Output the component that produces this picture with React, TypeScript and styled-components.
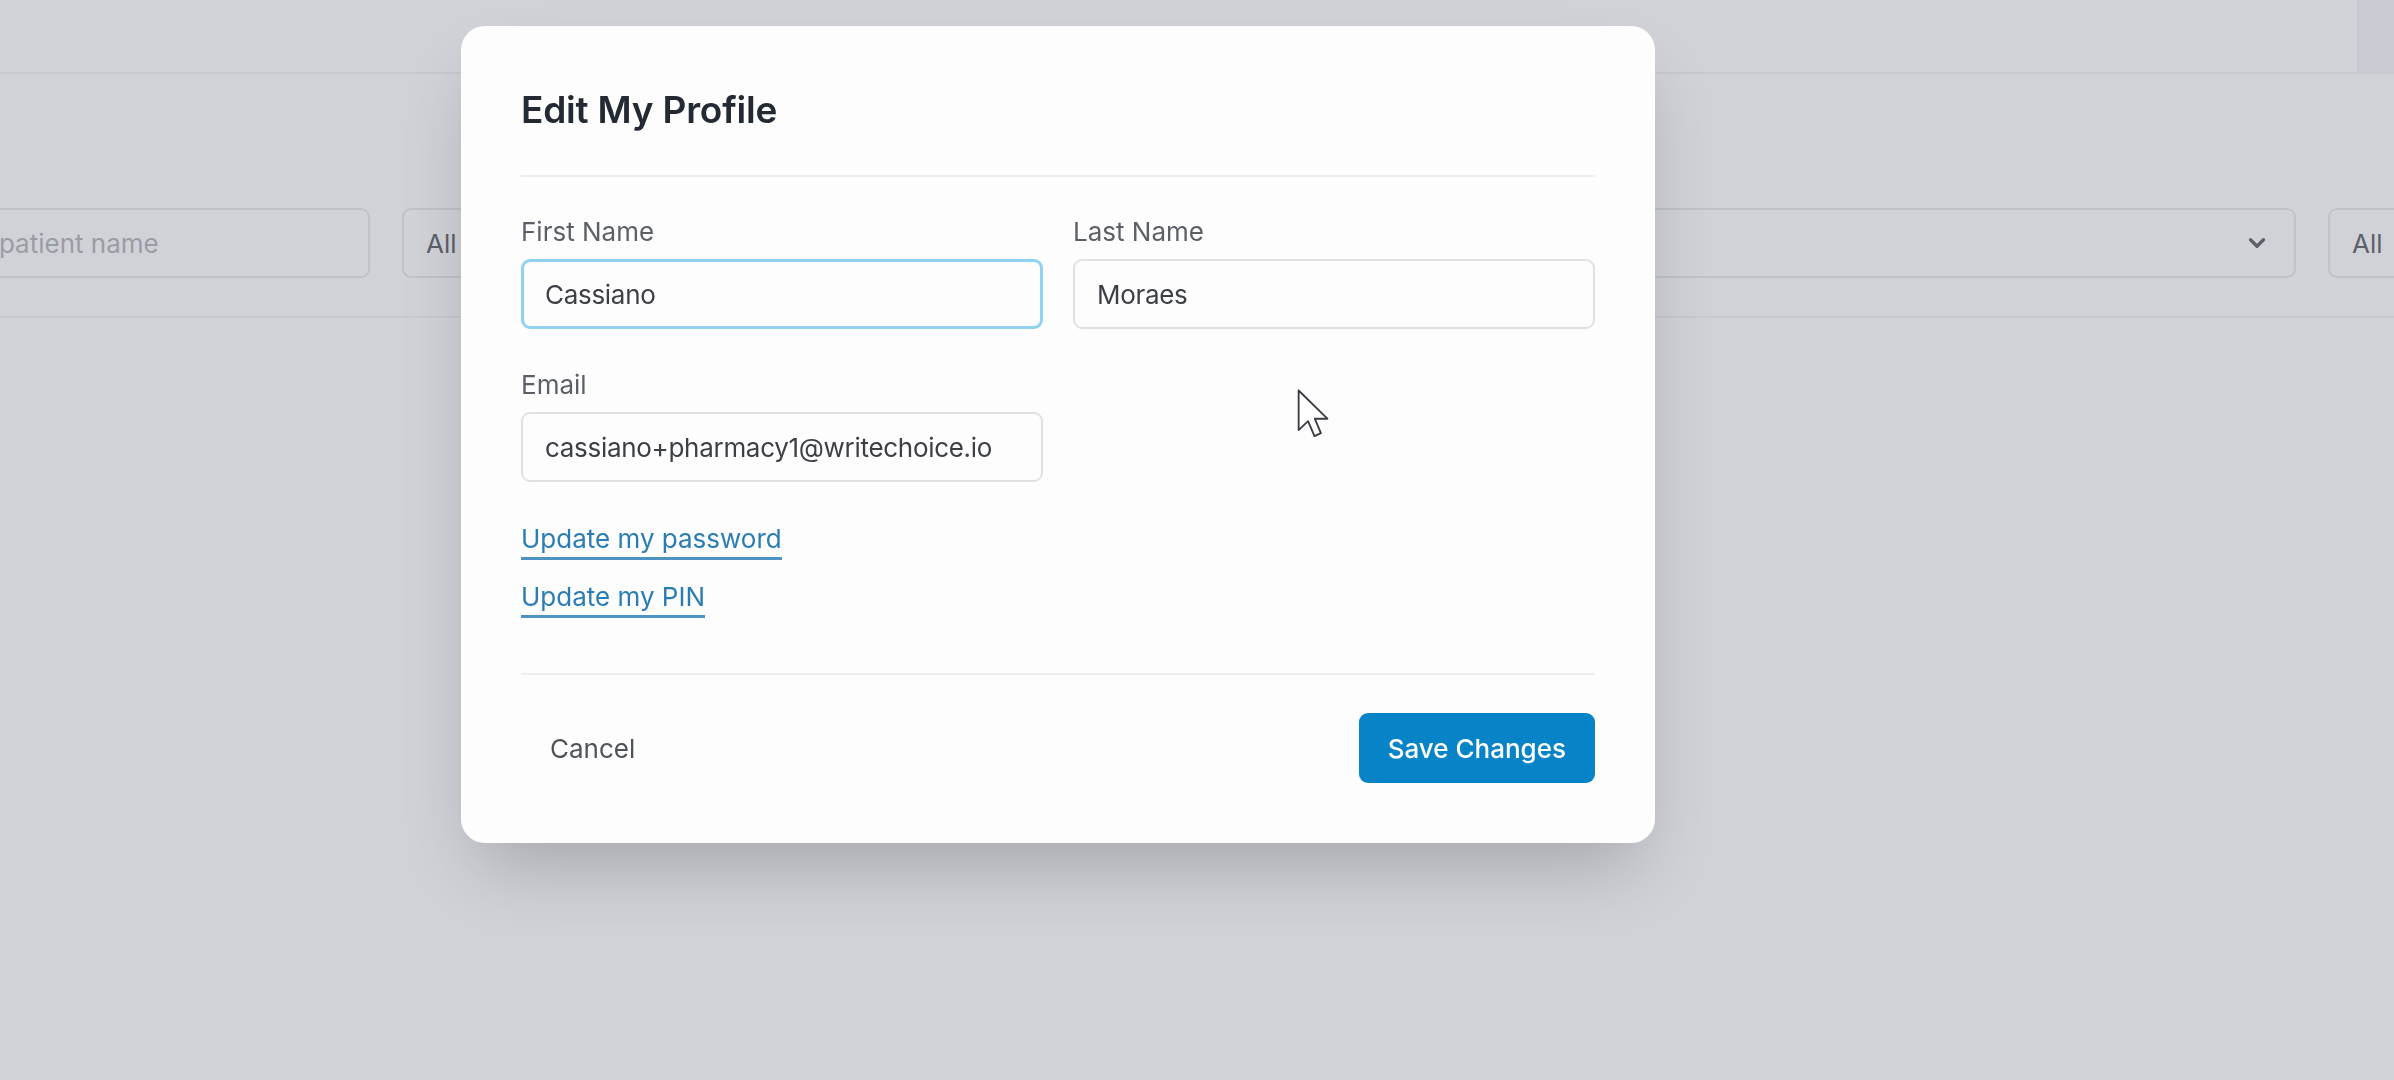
import React from 'react';
import styled, {createGlobalStyle} from 'styled-components';
import {ChevronDown} from 'lucide-react';

const GlobalStyle = createGlobalStyle`
  html, body {
    margin: 0;
    padding: 0;
  }
  body {
    font-family: Inter, "Noto Sans", sans-serif;
    background: #fbfbfc;
    overflow: hidden;
  }
`

const Page = styled.div`
  position: relative;
  width: 2394px;
  height: 1080px;
  overflow: hidden;
  background: #fdfdfe;
`

const TopBar = styled.header`
  height: 72px;
  border-bottom: 2px solid #eef0f2;
  display: flex;
  justify-content: flex-end;
`

const TopBarSide = styled.div`
  width: 35px;
  border-left: 2px solid #eceef1;
  background: #f3f5f7;
`

const Filters = styled.section`
  display: flex;
  gap: 32px;
  margin-left: -156px;
  padding: 134px 0 38px;
  border-bottom: 2px solid #eef0f2;
`

const FilterBox = styled.div<{ $w: number }>`
  flex: 0 0 ${p => p.$w}px;
  height: 70px;
  box-sizing: border-box;
  border: 2px solid #e3e5e8;
  border-radius: 9px;
  background: #fdfdfe;
  display: flex;
  align-items: center;
  justify-content: space-between;
  padding: 0 24px 0 22px;
  font-size: 26px;
  color: ${p => (p.color ? p.color : '#55585d')};
`

const Overlay = styled.div`
  position: fixed;
  inset: 0;
  background: rgba(107, 114, 128, 0.3);
`

const Modal = styled.div`
  position: absolute;
  left: 461px;
  top: 26px;
  width: 1194px;
  box-sizing: border-box;
  padding: 60px;
  background: #fdfdfd;
  border-radius: 24px;
  box-shadow: 0 37px 75px -18px rgba(0, 0, 0, 0.22);
`

const Title = styled.h2`
  margin: 0;
  font-size: 37px;
  line-height: 48px;
  font-weight: 600;
  letter-spacing: -0.2px;
  color: #232a33;
`

const Divider = styled.hr<{ $top: number }>`
  margin: ${p => p.$top}px 0 0;
  border: none;
  height: 2px;
  background: #eceef1;
`

const FieldGrid = styled.div`
  margin-top: 37px;
  display: grid;
  grid-template-columns: 1fr 1fr;
  column-gap: 30px;
  row-gap: 38px;
`

const Field = styled.label`
  display: flex;
  flex-direction: column;
  gap: 9px;
`

const Label = styled.span`
  font-size: 26px;
  line-height: 36px;
  color: #5b5f66;
`

const Input = styled.input<{ $focus?: boolean }>`
  height: 70px;
  box-sizing: border-box;
  padding: 0 ${p => (p.$focus ? 21 : 22)}px;
  font-family: Inter, "Noto Sans", sans-serif;
  font-size: 26px;
  letter-spacing: -0.3px;
  color: #3c3f45;
  background: #fdfdfd;
  border: ${p => (p.$focus ? '3px solid #91d1f1' : '2px solid #dfe1e5')};
  border-radius: 9px;
  outline: none;
`

const Links = styled.div`
  margin-top: 39px;
  display: flex;
  flex-direction: column;
  align-items: flex-start;
  gap: 19px;
`

const TextLink = styled.a`
  font-size: 26px;
  line-height: 36px;
  color: #2a7db4;
  text-decoration: none;
  border-bottom: 3px solid #4c93c4;
  cursor: pointer;
`

const Footer = styled.div`
  margin-top: 38px;
  display: flex;
  justify-content: space-between;
  align-items: center;
`

const Button = styled.button<{ $primary?: boolean }>`
  height: 70px;
  padding: 0 29px;
  border: none;
  border-radius: 9px;
  font-family: Inter, "Noto Sans", sans-serif;
  font-size: 26px;
  font-weight: ${p => (p.$primary ? 500 : 400)};
  color: ${p => (p.$primary ? '#ffffff' : '#4f535a')};
  background: ${p => (p.$primary ? '#0784c7' : 'transparent')};
  cursor: pointer;
`

const Pointer = styled.svg`
  position: absolute;
  left: 1296px;
  top: 388px;
`

export default function App() {
    return (
        <Page>
            <GlobalStyle/>
            <TopBar>
                <TopBarSide/>
            </TopBar>
            <Filters>
                <FilterBox $w={526} color="#aeb0b4">Search by patient name</FilterBox>
                <FilterBox $w={620}>All</FilterBox>
                <FilterBox $w={1242}>
                    <span/>
                    <ChevronDown size={26} strokeWidth={3} color="#55585d"/>
                </FilterBox>
                <FilterBox $w={300}>All</FilterBox>
            </Filters>

            <Overlay/>

            <Modal>
                <Title>Edit My Profile</Title>
                <Divider $top={41}/>
                <FieldGrid>
                    <Field>
                        <Label>First Name</Label>
                        <Input $focus defaultValue="Cassiano"/>
                    </Field>
                    <Field>
                        <Label>Last Name</Label>
                        <Input defaultValue="Moraes"/>
                    </Field>
                    <Field>
                        <Label>Email</Label>
                        <Input defaultValue="cassiano+pharmacy1@writechoice.io"/>
                    </Field>
                </FieldGrid>
                <Links>
                    <TextLink>Update my password</TextLink>
                    <TextLink>Update my PIN</TextLink>
                </Links>
                <Divider $top={55}/>
                <Footer>
                    <Button>Cancel</Button>
                    <Button $primary>Save Changes</Button>
                </Footer>
            </Modal>

            <Pointer width="35" height="52" viewBox="0 0 14 21">
                <path d="M1 1 L1 17 L4.8 13.4 L7.4 19.4 L10 18.2 L7.5 12.4 L12.6 12.4 Z"
                      fill="#ffffff" stroke="#3a3d42" strokeWidth="0.75" strokeLinejoin="round"/>
            </Pointer>
        </Page>
    );
}
